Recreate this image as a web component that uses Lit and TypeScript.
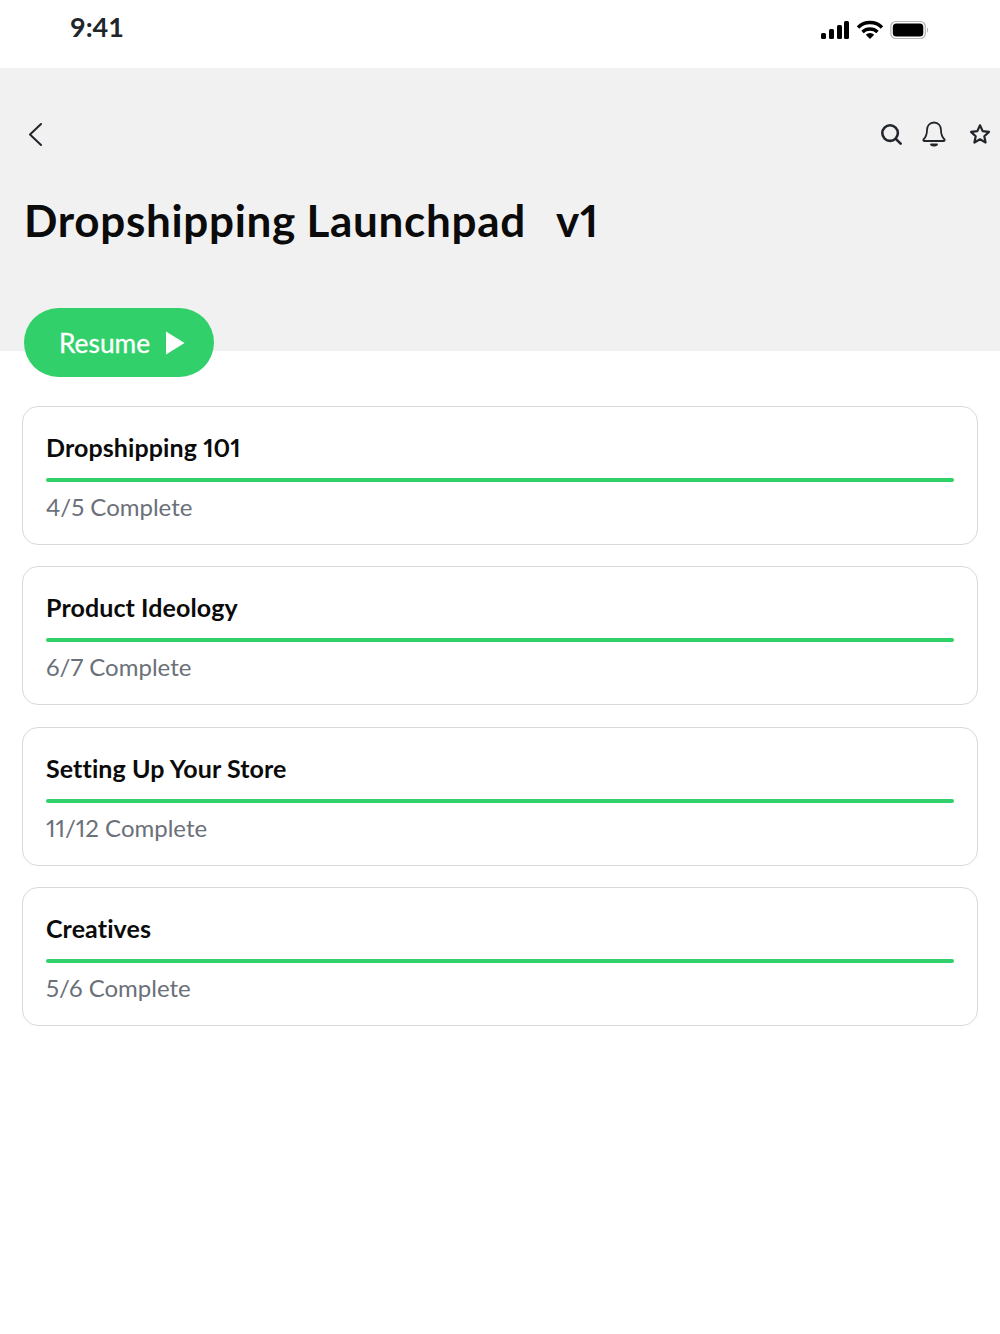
import { LitElement, html, css } from 'lit';
import { customElement, property } from 'lit/decorators.js';

@customElement('module-card')
export class ModuleCard extends LitElement {
  @property({ type: String }) name = '';
  @property({ type: String }) progress = '';

  static styles = css`
    :host {
      display: block;
      font-variant-numeric: proportional-nums;
      font-variant-ligatures: none;
    }

    .card {
      box-sizing: border-box;
      height: 139px;
      padding: 22px 23px 0;
      border: 1px solid #d9d9d9;
      border-radius: 16px;
      background: #fff;
    }

    .name {
      height: 36px;
      font-size: 25px;
      line-height: 36px;
      font-weight: 700;
      letter-spacing: 0.1px;
      color: #0b0b0b;
    }

    .bar {
      height: 4px;
      margin-top: 13px;
      border-radius: 2px;
      background: #32d06a;
    }

    .progress {
      margin-top: 8px;
      font-size: 24px;
      line-height: 34px;
      color: #6b7079;
    }
  `;

  render() {
    return html`
      <div class="card">
        <div class="name">${this.name}</div>
        <div class="bar"></div>
        <div class="progress">${this.progress}</div>
      </div>
    `;
  }
}

@customElement('app-root')
export class AppRoot extends LitElement {
  modules = [
    { name: 'Dropshipping 101', progress: '4/5 Complete' },
    { name: 'Product Ideology', progress: '6/7 Complete' },
    { name: 'Setting Up Your Store', progress: '11/12 Complete' },
    { name: 'Creatives', progress: '5/6 Complete' },
  ];

  static styles = css`
    :host {
      display: block;
      min-height: 1334px;
      background: #fff;
      font-family: Lato, 'Liberation Sans', sans-serif;
    }

    .status {
      display: flex;
      justify-content: space-between;
      height: 68px;
      padding: 0 70px 0 70px;
    }

    .time {
      padding-top: 10px;
      font-size: 27px;
      line-height: 34px;
      font-weight: 700;
      color: #22262b;
    }

    .status-icons {
      display: flex;
      align-items: flex-start;
      gap: 6px;
      padding: 20px 0 0;
    }

    .hero {
      box-sizing: border-box;
      height: 283px;
      padding: 50px 9px 0 24px;
      background: #f1f1f1;
    }

    .nav {
      display: flex;
      align-items: center;
      justify-content: space-between;
      height: 32px;
    }

    .actions {
      display: flex;
      align-items: center;
      gap: 20px;
    }

    .actions .star {
      margin-left: 3px;
    }

    svg {
      display: block;
    }

    h1 {
      margin: 38px 0 0;
      font-size: 44px;
      line-height: 64px;
      font-weight: 700;
      letter-spacing: 0.7px;
      word-spacing: -1px;
      font-variant-numeric: proportional-nums;
      color: #0b0b0b;
      white-space: pre;
    }

    .resume {
      display: flex;
      align-items: center;
      gap: 15px;
      box-sizing: border-box;
      width: 190px;
      height: 69px;
      margin: -43px 0 0 24px;
      padding-left: 35px;
      position: relative;
      border-radius: 35px;
      background: #32d06a;
      color: #fff;
      font-size: 26.300px;
      -webkit-text-stroke: 0.3px #fff;
    }

    .cards {
      display: flex;
      flex-direction: column;
      gap: 21.330px;
      margin: 29px 22px 0;
    }
  `;

  render() {
    return html`
      <div class="status">
        <div class="time">9:41</div>
        <div class="status-icons">
          <svg width="30" height="20" viewBox="0 0 30 20" fill="#000">
            <rect x="1" y="13" width="5" height="6" rx="1.500" />
            <rect x="9" y="9" width="5" height="10" rx="1.500" />
            <rect x="17" y="5" width="5" height="14" rx="1.500" />
            <rect x="24" y="1" width="5" height="18" rx="1.500" />
          </svg>
          <svg width="28" height="20" viewBox="0 0 28 20" fill="none" stroke="#000" stroke-width="3.400">
            <path d="M2 7.500a17 17 0 0 1 24 0" />
            <path d="M6.500 12a11 11 0 0 1 15 0" />
            <path d="M14 19l-4.200-4.300a6 6 0 0 1 8.400 0z" fill="#000" stroke="none" />
          </svg>
          <svg width="40" height="20" viewBox="0 0 40 20">
            <rect x="0.800" y="1.500" width="34.500" height="17" rx="5" fill="none" stroke="#b4b4b4" stroke-width="1.200" />
            <rect x="2.800" y="3.500" width="30.500" height="13" rx="3.500" fill="#000" />
            <path d="M37 7.500c1.500.5 1.500 4.500 0 5z" fill="#b4b4b4" />
          </svg>
        </div>
      </div>

      <div class="hero">
        <div class="nav">
          <svg width="24" height="24" viewBox="0 0 24 24" fill="none" stroke="#22262b" stroke-width="2" stroke-linecap="round" stroke-linejoin="round">
            <path d="M17 2L6 12.500 17 23" />
          </svg>
          <div class="actions">
            <svg width="22" height="22" viewBox="0 0 24 24" fill="none" stroke="#22262b" stroke-width="2.800" stroke-linecap="round">
              <circle cx="11" cy="11" r="8.500" />
              <path d="M17.500 17.500L22.500 22.500" />
            </svg>
            <svg width="24" height="26" viewBox="0 0 24 26" fill="none" stroke="#22262b" stroke-width="1.800" stroke-linecap="round" stroke-linejoin="round">
              <path d="M12 1.500c-4.500 0-7 3.500-7 7.500 0 5-1 7-3.500 9.500-.5.800 0 1.500 1 1.500h19c1 0 1.500-.7 1-1.500C20 16 19 14 19 9c0-4-2.500-7.500-7-7.500z" />
              <path d="M9 23.500c1.500 1.500 4.500 1.500 6 0z" fill="#22262b" />
            </svg>
            <svg class="star" width="22" height="22" viewBox="0 0 24 24" fill="none" stroke="#22262b" stroke-width="2.400" stroke-linejoin="round">
              <path d="M12 2.500l2.900 6.400 6.900.8-5.100 4.700 1.400 6.900-6.100-3.500-6.100 3.500 1.400-6.900-5.100-4.700 6.900-.8z" />
            </svg>
          </div>
        </div>
        <h1>Dropshipping Launchpad   v1</h1>
      </div>

      <div class="resume">
        <span>Resume</span>
        <svg width="20" height="24" viewBox="0 0 20 24" fill="#fff">
          <path d="M1 0.500L19.500 12 1 23.500z" />
        </svg>
      </div>

      <div class="cards">
        ${this.modules.map(
          (m) => html`<module-card .name=${m.name} .progress=${m.progress}></module-card>`
        )}
      </div>
    `;
  }
}
